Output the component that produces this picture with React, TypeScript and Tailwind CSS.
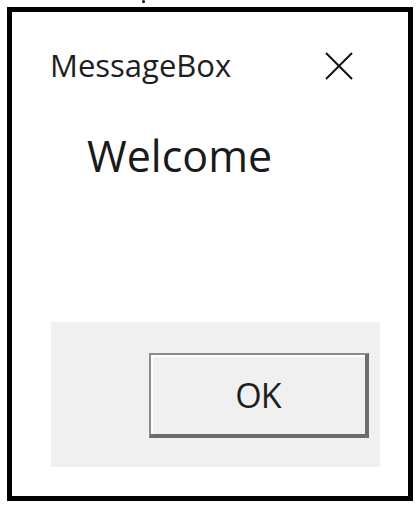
export default function App() {
  return (
    <div className="relative w-[417px] h-[512px] bg-white pl-[7px] pt-[7px]" style={{ fontFamily: '"Open Sans", "Noto Sans", sans-serif' }}>
      {/* stray dot above the frame */}
      <span className="absolute left-[142px] top-0 w-[3px] h-[3px] rounded-full bg-black" />

      <div className="w-[406px] h-[494px] border-[5px] border-black flex flex-col">
        {/* title bar */}
        <div className="flex items-center justify-between pl-[38px] pr-[54px] pt-[37px]">
          <span className="text-[31px] leading-none text-[#1e1e1e]">MessageBox</span>
          <svg width="30" height="30" viewBox="0 0 30 30" className="mt-[2px]">
            <path d="M2 2 L28 28 M28 2 L2 28" stroke="#111" strokeWidth="2" fill="none" />
          </svg>
        </div>

        {/* message */}
        <div className="pl-[75px] pt-[53px] text-[43px] leading-none text-[#1a1a1a]">Welcome</div>

        {/* button area */}
        <div className="mt-auto mb-[29px] ml-[39px] w-[329px] h-[145px] bg-[#f0f0f0] flex justify-end items-start pt-[31px] pr-[11px]">
          <button className="w-[220px] h-[85px] bg-[#f0f0f0] border-t-2 border-l-2 border-r-4 border-b-4 border-t-[#8c8c8c] border-l-[#8c8c8c] border-r-[#6c6c6c] border-b-[#6c6c6c] shadow-[inset_2px_2px_0_#ffffff] text-[34px] leading-none text-[#1e1e1e] tracking-[-1px]">
            OK
          </button>
        </div>
      </div>
    </div>
  );
}
